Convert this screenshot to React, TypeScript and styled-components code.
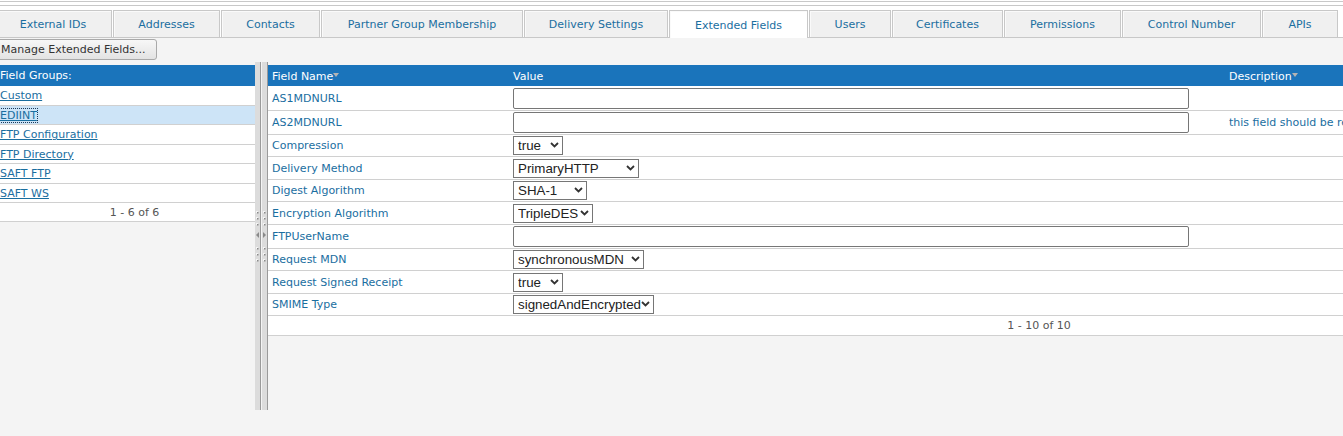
import React from 'react';
import styled, { createGlobalStyle } from 'styled-components';

const GlobalStyle = createGlobalStyle`
  html, body { margin: 0; padding: 0; background: #f4f4f4; }
  body {
    font-family: "DejaVu Sans", Verdana, sans-serif;
    font-size: 11px;
    overflow: hidden;
  }
  * { box-sizing: border-box; }
`;

const TEXT = '#1a6e9f';
const BLUE = '#1a74bb';
const LINE = '#d0d0d0';

const Page = styled.div`
  margin-left: -6px;
  width: 1349px;
  height: 436px;
  display: flex;
  flex-direction: column;
`;

const TopStrip = styled.div`
  background: #fff;
  padding-top: 1px;
  height: 10px;
`;

const StripLines = styled.div`
  height: 5px;
  border-top: 1px solid #c8c8c8;
  border-bottom: 1px solid #c8c8c8;
`;

const TabBar = styled.div`
  display: flex;
  align-items: flex-start;
  gap: 1px;
  height: 28px;
  background: #fff;
  border-bottom: 1px solid #c8c8c8;
`;

const Tab = styled.div<{ $w: number; $active?: boolean }>`
  width: ${(p) => p.$w}px;
  height: ${(p) => (p.$active ? 28 : 27)}px;
  flex: none;
  display: flex;
  align-items: center;
  justify-content: center;
  padding-top: 1px;
  border: 1px solid #c8c8c8;
  border-bottom: none;
  box-shadow: inset 1px 1px 0 #fafafa;
  background: ${(p) => (p.$active ? '#fff' : '#f0f0f0')};
  color: ${TEXT};
  white-space: nowrap;
  position: relative;
  z-index: ${(p) => (p.$active ? 1 : 0)};
`;

const ButtonRow = styled.div`
  height: 24px;
  padding-top: 1px;
`;

const Button = styled.button`
  width: 163px;
  height: 21px;
  padding: 0 0 1px 6px;
  text-align: left;
  font-family: inherit;
  font-size: 11px;
  color: #333;
  background: linear-gradient(#f7f7f7, #e3e3e3);
  border: 1px solid #a9a9a9;
  border-radius: 3px;
`;

const Main = styled.div`
  display: flex;
  height: 348px;
`;

const LeftPanel = styled.div`
  width: 261px;
  flex: none;
  align-self: flex-start;
  margin-top: 3px;
  background: #fff;
`;

const HeaderBar = styled.div`
  height: 21px;
  line-height: 22px;
  background: ${BLUE};
  color: #fff;
  padding-left: 6px;
`;

const GroupRow = styled.div<{ $selected?: boolean }>`
  height: 19.5px;
  padding-left: 6px;
  padding-top: 1px;
  display: flex;
  align-items: center;
  border-bottom: 1px solid ${LINE};
  background: ${(p) => (p.$selected ? '#cde4f7' : '#fff')};
`;

const GroupLink = styled.a<{ $focused?: boolean }>`
  color: ${TEXT};
  text-decoration: underline;
  outline: ${(p) => (p.$focused ? '1px dotted #1a3a5a' : 'none')};
  cursor: pointer;
`;

const Pager = styled.div`
  height: 19px;
  display: flex;
  align-items: center;
  justify-content: center;
  padding-left: 20px;
  padding-top: 1px;
  color: #555;
  border-bottom: 1px solid ${LINE};
`;

const Splitter = styled.div`
  width: 13px;
  flex: none;
  display: flex;
  gap: 1px;
  position: relative;
`;

const SplitBar = styled.div`
  width: 6px;
  background: #dcdcdc;
  border-right: 1px solid #9a9a9a;
`;

const Grip = styled.svg`
  position: absolute;
  left: 0;
  top: 50%;
  margin-top: -26px;
`;

const RightPanel = styled.div`
  flex: 1;
  min-width: 0;
  overflow: hidden;
  align-self: flex-start;
  margin-top: 3px;
`;

const Table = styled.table`
  width: 1542px;
  table-layout: fixed;
  border-collapse: collapse;
  background: #fff;
`;

const Th = styled.th`
  height: 21px;
  padding: 1px 4px 0;
  background: ${BLUE};
  color: #fff;
  font-weight: normal;
  text-align: left;
  white-space: nowrap;
`;

const SortMark = styled.span`
  display: inline-block;
  vertical-align: top;
  margin-top: 3px;
  width: 0;
  height: 0;
  border-left: 3px solid transparent;
  border-right: 3px solid transparent;
  border-top: 4px solid #b4b4b4;
`;

const Tr = styled.tr<{ $h: number }>`
  height: ${(p) => p.$h}px;
  border-bottom: 1px solid ${LINE};
`;

const Td = styled.td`
  padding: 1px 4px 0;
  color: ${TEXT};
  white-space: nowrap;
  overflow: hidden;
  vertical-align: middle;
`;

const PagerCell = styled.td`
  height: 20px;
  padding-top: 1px;
  text-align: center;
  color: #555;
`;

const TextInput = styled.input`
  display: block;
  width: 676px;
  height: 21px;
  border: 1px solid #767676;
  border-radius: 2px;
  background: #fff;
  font-family: "Liberation Sans", Arial, sans-serif;
  font-size: 13px;
`;

const SelectBox = styled.div<{ $w: number }>`
  position: relative;
  width: ${(p) => p.$w}px;
  height: 19px;
`;

const Select = styled.select`
  appearance: none;
  -webkit-appearance: none;
  display: block;
  width: 100%;
  height: 100%;
  border: 1px solid #767676;
  border-radius: 0;
  background: #fff;
  color: #222;
  padding: 0 0 0 4px;
  font-family: "Liberation Sans", Arial, sans-serif;
  font-size: 13.33px;
  line-height: 17px;
`;

const Chevron = styled.svg`
  position: absolute;
  right: 4px;
  top: 6px;
  pointer-events: none;
`;

const tabs = [
  { label: 'External IDs', w: 118 },
  { label: 'Addresses', w: 107 },
  { label: 'Contacts', w: 99 },
  { label: 'Partner Group Membership', w: 202 },
  { label: 'Delivery Settings', w: 144 },
  { label: 'Extended Fields', w: 139, active: true },
  { label: 'Users', w: 82 },
  { label: 'Certificates', w: 111 },
  { label: 'Permissions', w: 117 },
  { label: 'Control Number', w: 139 },
  { label: 'APIs', w: 76 },
];

const groups = ['Custom', 'EDIINT', 'FTP Configuration', 'FTP Directory', 'SAFT FTP', 'SAFT WS'];

type Field =
  | { name: string; kind: 'input'; desc?: string }
  | { name: string; kind: 'select'; value: string; w: number; desc?: string };

const fields: Field[] = [
  { name: 'AS1MDNURL', kind: 'input' },
  { name: 'AS2MDNURL', kind: 'input', desc: 'this field should be removed when not required' },
  { name: 'Compression', kind: 'select', value: 'true', w: 50 },
  { name: 'Delivery Method', kind: 'select', value: 'PrimaryHTTP', w: 126 },
  { name: 'Digest Algorithm', kind: 'select', value: 'SHA-1', w: 74 },
  { name: 'Encryption Algorithm', kind: 'select', value: 'TripleDES', w: 80 },
  { name: 'FTPUserName', kind: 'input' },
  { name: 'Request MDN', kind: 'select', value: 'synchronousMDN', w: 131 },
  { name: 'Request Signed Receipt', kind: 'select', value: 'true', w: 50 },
  { name: 'SMIME Type', kind: 'select', value: 'signedAndEncrypted', w: 141 },
];

const GripIcon = () => {
  const dotsY = [1, 7, 13, 37, 43, 49];
  return (
    <Grip width="13" height="52" viewBox="0 0 13 52">
      {dotsY.map((y) => (
        <g key={y}>
          <rect x="1" y={y} width="2" height="2" fill="#f4f4f4" />
          <rect x="2" y={y + 1} width="1.5" height="1.5" fill="#8a8a8a" />
          <rect x="8" y={y} width="2" height="2" fill="#f4f4f4" />
          <rect x="9" y={y + 1} width="1.5" height="1.5" fill="#8a8a8a" />
        </g>
      ))}
      <path d="M4 22 L1 25 L4 28 Z" fill="#8a8a8a" />
      <path d="M8 22 L11 25 L8 28 Z" fill="#8a8a8a" />
    </Grip>
  );
};

const Dropdown = ({ value, w }: { value: string; w: number }) => (
  <SelectBox $w={w}>
    <Select defaultValue={value}>
      <option value={value}>{value}</option>
    </Select>
    <Chevron width="9" height="6" viewBox="0 0 9 6">
      <path d="M1 1 L4.5 4.5 L8 1" fill="none" stroke="#333" strokeWidth="1.8" />
    </Chevron>
  </SelectBox>
);

export default function App() {
  return (
    <>
      <GlobalStyle />
      <Page>
        <TopStrip>
          <StripLines />
        </TopStrip>
        <TabBar>
          {tabs.map((t) => (
            <Tab key={t.label} $w={t.w} $active={t.active}>
              {t.label}
            </Tab>
          ))}
        </TabBar>
        <ButtonRow>
          <Button>Manage Extended Fields...</Button>
        </ButtonRow>
        <Main>
          <LeftPanel>
            <HeaderBar>Field Groups:</HeaderBar>
            {groups.map((g) => (
              <GroupRow key={g} $selected={g === 'EDIINT'}>
                <GroupLink $focused={g === 'EDIINT'}>{g}</GroupLink>
              </GroupRow>
            ))}
            <Pager>1 - 6 of 6</Pager>
          </LeftPanel>
          <Splitter>
            <SplitBar />
            <SplitBar />
            <GripIcon />
          </Splitter>
          <RightPanel>
            <Table>
              <colgroup>
                <col style={{ width: 241 }} />
                <col style={{ width: 716 }} />
                <col />
              </colgroup>
              <thead>
                <tr>
                  <Th>
                    Field Name
                    <SortMark />
                  </Th>
                  <Th>Value</Th>
                  <Th>
                    Description
                    <SortMark />
                  </Th>
                </tr>
              </thead>
              <tbody>
                {fields.map((f) => (
                  <Tr key={f.name} $h={f.kind === 'input' ? 24 : 22.5}>
                    <Td>{f.name}</Td>
                    <Td>
                      {f.kind === 'input' ? (
                        <TextInput type="text" defaultValue="" />
                      ) : (
                        <Dropdown value={f.value} w={f.w} />
                      )}
                    </Td>
                    <Td>{f.desc ?? ''}</Td>
                  </Tr>
                ))}
                <Tr $h={20}>
                  <PagerCell colSpan={3}>1 - 10 of 10</PagerCell>
                </Tr>
              </tbody>
            </Table>
          </RightPanel>
        </Main>
      </Page>
    </>
  );
}
